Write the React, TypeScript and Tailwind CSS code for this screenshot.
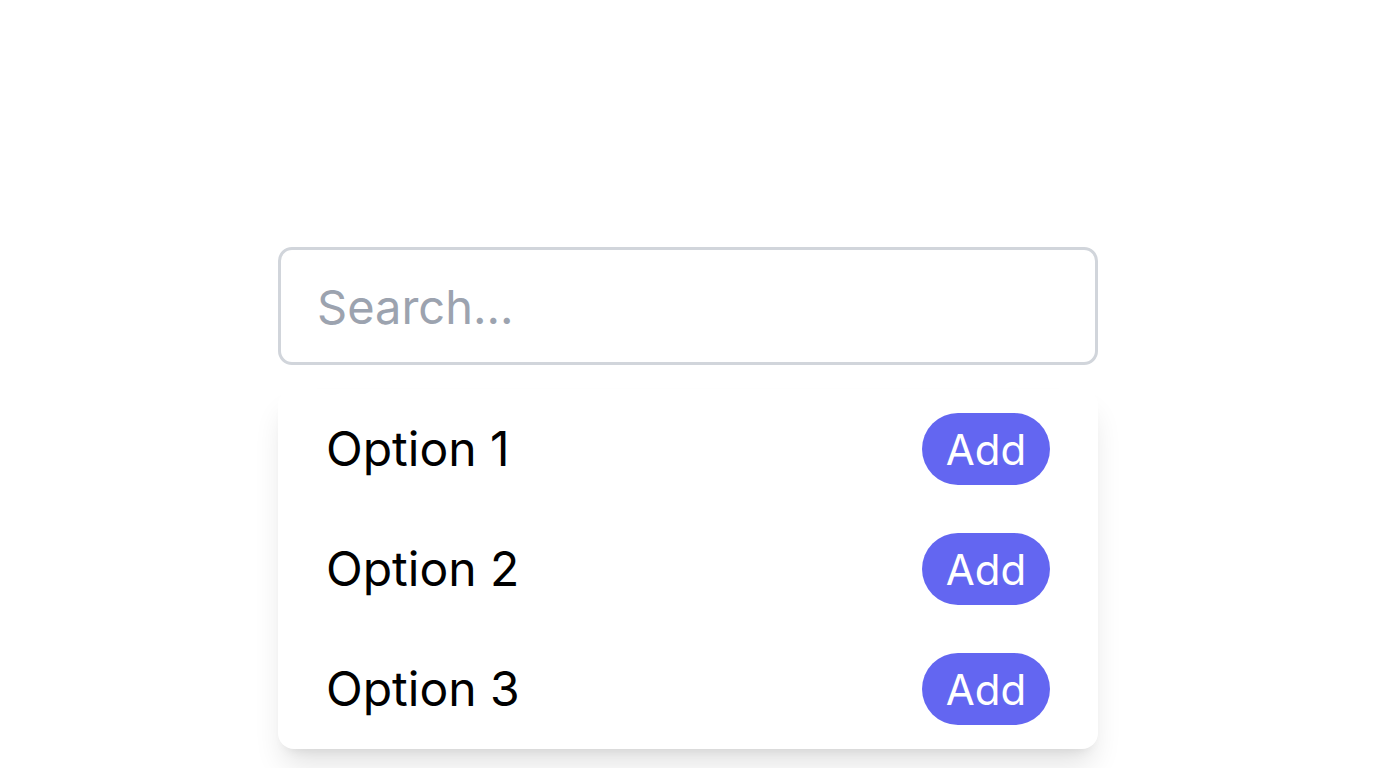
export default function App() {
  const options = ["Option 1", "Option 2", "Option 3"];

  return (
    <div className="min-h-screen bg-white flex justify-center pt-[247px] font-['Inter',sans-serif]">
      <div className="w-[820px]">
        {/* Search input */}
        <input
          type="text"
          placeholder="Search..."
          className="w-full h-[118px] px-[36px] border-[3px] border-[#d1d5db] rounded-[14px] text-[47px] text-black placeholder:text-[#9ca3af] outline-none"
        />

        {/* Dropdown list */}
        <ul className="mt-[24px] bg-white rounded-[16px] shadow-[0_20px_30px_-6px_rgba(0,0,0,0.12),0_8px_12px_-8px_rgba(0,0,0,0.1)]">
          {options.map((opt) => (
            <li key={opt} className="h-[120px] px-[48px] flex items-center justify-between">
              <span className="text-[48px] text-black">{opt}</span>
              <button className="w-[128px] h-[72px] rounded-full bg-[#6366f1] text-white text-[42px] flex items-center justify-center">
                Add
              </button>
            </li>
          ))}
        </ul>
      </div>
    </div>
  );
}
